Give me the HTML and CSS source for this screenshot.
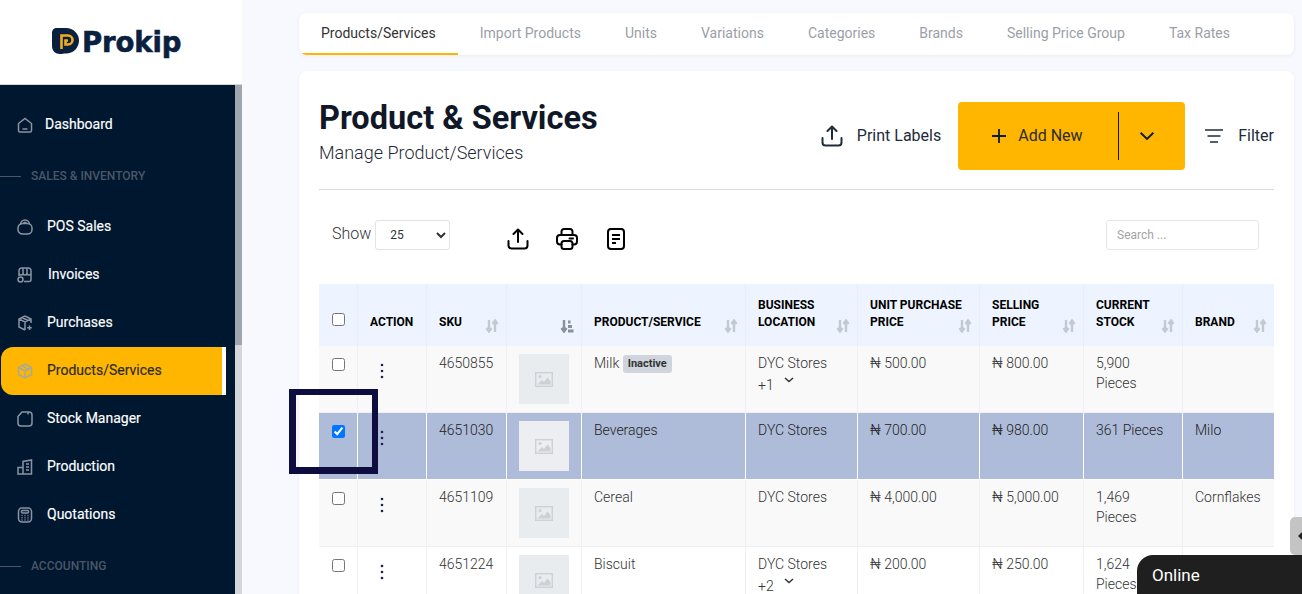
FILE: index.html
```html
<!DOCTYPE html>
<html lang="en">
<head>
<meta charset="utf-8">
<title>Prokip - Products</title>
<link rel="stylesheet" href="styles.css">
</head>
<body>
<svg class="defs" width="0" height="0" aria-hidden="true">
  <symbol id="sort" viewBox="0 0 14 14"><path d="M4 1v11M1.500 9 4 12.500 6.500 9M10 13V2M7.500 5 10 1.500 12.500 5" fill="none" stroke="currentColor" stroke-width="2.400"/></symbol>
  <symbol id="pic" viewBox="0 0 18 15"><rect x=".7" y=".7" width="16.600" height="13.600" fill="none" stroke="currentColor" stroke-width="1.400"/><circle cx="5" cy="4.500" r="1.600" fill="currentColor"/><path d="M2.500 12.500 7 8l2 2 3.500-4.500 3 3.500v3.500z" fill="currentColor"/></symbol>
  <symbol id="dots" viewBox="0 0 4 16"><circle cx="2" cy="2" r="1.300"/><circle cx="2" cy="8" r="1.300"/><circle cx="2" cy="14" r="1.300"/></symbol>
  <symbol id="chev" viewBox="0 0 10 6"><path d="M1 1l4 3.500L9 1" fill="none" stroke="currentColor" stroke-width="1.500"/></symbol>
  <symbol id="upload" viewBox="0 0 22 22"><path d="M11 14V2M6.500 6 11 1.500 15.500 6M1.500 13v4.500a3 3 0 0 0 3 3h13a3 3 0 0 0 3-3V13" fill="none" stroke="currentColor" stroke-width="2" stroke-linecap="round" stroke-linejoin="round"/></symbol>
</svg>
<div class="app">
  <aside class="sidebar">
    <div class="brand">
      <svg class="brand-mark" viewBox="0 0 27 26" width="27" height="26"><path d="M0 4.500A4.500 4.500 0 0 1 4.500 0H14a13 12.500 0 0 1 13 12.500A13 13 0 0 1 14 25.500c-2.500 0-4 .500-6 .500-4.500 0-8-3-8-8z" fill="#0b1f3f"/><path d="M9.500 21V7.500H16a4.500 4.500 0 0 1 0 9h-2.500V12.500H16" fill="none" stroke="#f2ac1f" stroke-width="2.600"/></svg>
      <span class="brand-name">Prokip</span>
    </div>
    <div class="nav-wrap">
      <nav class="nav">
        <a class="nav-item nav-first"><svg class="nav-icon" viewBox="0 0 16 16"><path d="M1.500 6.500 8 1.500l6.500 5v7a1.500 1.500 0 0 1-1.500 1.500H3a1.500 1.500 0 0 1-1.500-1.500zM5.500 12h5"/></svg><span>Dashboard</span></a>
        <div class="nav-section"><span class="rule"></span>SALES &amp; INVENTORY</div>
        <a class="nav-item"><svg class="nav-icon" viewBox="0 0 16 16"><rect x="1" y="4.500" width="14" height="10.500" rx="4.500"/><path d="M3.500 5.500C3.500 3 5.500 1 8 1s4.500 2 4.500 4.500M6.500 3.500h3"/></svg><span>POS Sales</span></a>
        <a class="nav-item"><svg class="nav-icon" viewBox="0 0 16 16"><path d="M2 6V3.500A2.500 2.500 0 0 1 4.500 1h7A2.500 2.500 0 0 1 14 3.500V6M2 6a2 2 0 0 0 4 0 2 2 0 0 0 4 0 2 2 0 0 0 4 0M6 1v5M10 1v5M14 6v6.500a2 2 0 0 1-2 2H7M2 6v3"/><circle cx="3.500" cy="12.500" r="2.500"/></svg><span class="wide">Invoices</span></a>
        <a class="nav-item"><svg class="nav-icon" viewBox="0 0 16 16"><path d="M8 1l6 3v4M8 1 2 4v8l6 3M2 4l6 3 6-3M8 7v8M5 2.500l6 3"/><path d="M12.500 10.500v4.500M10.200 12.800h4.600"/></svg><span>Purchases</span></a>
        <a class="nav-item is-active"><svg class="nav-icon" viewBox="0 0 16 16"><path d="M8 1l6.500 3.500v7L8 15l-6.500-3.500v-7zM1.500 4.500 8 8l6.500-3.500M8 8v7M4.800 2.700 11.200 6.200"/></svg><span>Products/Services</span></a>
        <a class="nav-item"><svg class="nav-icon" viewBox="0 0 16 16"><path d="M1 5.500 5 1h7a3 3 0 0 1 3 3v8a3 3 0 0 1-3 3H4a3 3 0 0 1-3-3zM11 1v2.500"/></svg><span>Stock Manager</span></a>
        <a class="nav-item"><svg class="nav-icon" viewBox="0 0 16 16"><path d="M1 15V8.500h5V15zM6 15V2.500L14.500 1v14zM1 15h14M9 5h3M9 8h3M9 11h3"/></svg><span>Production</span></a>
        <a class="nav-item"><svg class="nav-icon" viewBox="0 0 16 16"><rect x="1.500" y="1" width="13" height="14" rx="3.500"/><rect x="4.500" y="3.500" width="7" height="2.500" rx="1"/><path d="M4.500 8.500h1M7.500 8.500h1M10.500 8.500h1M4.500 10.800h1M7.500 10.800h1M10.500 10.800h1M4.500 13h1M7.500 13h1M10.500 13h1"/></svg><span>Quotations</span></a>
        <div class="nav-section"><span class="rule"></span>ACCOUNTING</div>
      </nav>
      <div class="sidebar-scroll"><div class="sidebar-thumb"></div></div>
    </div>
  </aside>

  <main class="main">
    <div class="tabs">
      <a class="tab is-current">Products/Services</a>
      <a class="tab">Import Products</a>
      <a class="tab">Units</a>
      <a class="tab">Variations</a>
      <a class="tab">Categories</a>
      <a class="tab">Brands</a>
      <a class="tab">Selling Price Group</a>
      <a class="tab">Tax Rates</a>
    </div>

    <section class="card">
      <header class="page-head">
        <div class="page-title">
          <h1>Product &amp; Services</h1>
          <p>Manage Product/Services</p>
        </div>
        <div class="page-actions">
          <a class="action-link"><svg class="icon-22" width="22" height="22"><use href="#upload"/></svg>Print Labels</a>
          <div class="add-btn">
            <span class="add-main"><svg width="16" height="16" viewBox="0 0 16 16"><path d="M8 1v14M1 8h14" stroke="#0b1a30" stroke-width="1.800"/></svg>Add New</span>
            <span class="add-caret"><svg width="16" height="10" viewBox="0 0 10 6"><path d="M1 1l4 3.800L9 1" fill="none" stroke="#0b1a30" stroke-width="1.200"/></svg></span>
          </div>
          <a class="action-link filter"><svg width="20" height="14" viewBox="0 0 20 14"><path d="M1 1h18M3.500 7h13M6 13h8" stroke="#222b3a" stroke-width="1.600"/></svg>Filter</a>
        </div>
      </header>

      <div class="toolbar">
        <label class="show">Show
          <select class="page-size"><option>25</option></select>
        </label>
        <div class="tools">
          <svg class="icon-22" width="22" height="22"><use href="#upload"/></svg>
          <svg class="icon-22" width="22" height="22" viewBox="0 0 22 22"><path d="M5.500 7V3.500a2.500 2.500 0 0 1 2.500-2.500h6a2.500 2.500 0 0 1 2.500 2.500V7M5.500 16.500H4A3 3 0 0 1 1 13.500V10a3 3 0 0 1 3-3h14a3 3 0 0 1 3 3v3.500a3 3 0 0 1-3 3h-1.500M13.500 10.500H17" fill="none" stroke="#000" stroke-width="2" stroke-linecap="round"/><rect x="5.500" y="13" width="11" height="8" rx="2.500" fill="none" stroke="#000" stroke-width="2"/></svg>
          <svg class="icon-22" width="22" height="22" viewBox="0 0 22 22"><rect x="3" y="1" width="16" height="20" rx="3" fill="none" stroke="#000" stroke-width="2"/><path d="M7 7h8M7 11h8M7 15h4" stroke="#000" stroke-width="2"/></svg>
        </div>
        <input class="search" type="text" placeholder="Search ...">
      </div>

      <table class="grid">
        <colgroup>
          <col class="c-check"><col class="c-action"><col class="c-sku"><col class="c-img"><col class="c-prod"><col class="c-loc"><col class="c-unit"><col class="c-sell"><col class="c-stock"><col class="c-brand">
        </colgroup>
        <thead>
          <tr>
            <th class="cell-check"><input type="checkbox"></th>
            <th><div class="th-in">ACTION</div></th>
            <th><div class="th-in">SKU<svg class="sort"><use href="#sort"/></svg></div></th>
            <th><div class="th-in"><svg class="sort sort-on" viewBox="0 0 14 14"><path d="M4 1v11M1.500 9 4 12.500 6.500 9" fill="none" stroke="currentColor" stroke-width="2.400"/><path d="M8 1.500h2.500v3H8zM8 6h4v3H8zM8 10.500h5.500v3H8z" fill="currentColor"/></svg></div></th>
            <th><div class="th-in">PRODUCT/SERVICE<svg class="sort"><use href="#sort"/></svg></div></th>
            <th><div class="th-in">BUSINESS<br>LOCATION<svg class="sort"><use href="#sort"/></svg></div></th>
            <th><div class="th-in">UNIT PURCHASE<br>PRICE<svg class="sort"><use href="#sort"/></svg></div></th>
            <th><div class="th-in">SELLING<br>PRICE<svg class="sort"><use href="#sort"/></svg></div></th>
            <th><div class="th-in">CURRENT<br>STOCK<svg class="sort"><use href="#sort"/></svg></div></th>
            <th><div class="th-in">BRAND<svg class="sort"><use href="#sort"/></svg></div></th>
          </tr>
        </thead>
        <tbody>
          <tr class="odd">
            <td class="cell-check"><input type="checkbox"></td>
            <td class="cell-dots"><svg class="dots"><use href="#dots"/></svg></td>
            <td>4650855</td>
            <td class="cell-img"><div class="thumb"><svg class="pic"><use href="#pic"/></svg></div></td>
            <td>Milk <span class="badge">Inactive</span></td>
            <td>DYC Stores<div class="more">+1 <svg class="chev"><use href="#chev"/></svg></div></td>
            <td>₦ 500.00</td>
            <td>₦ 800.00</td>
            <td>5,900 Pieces</td>
            <td></td>
          </tr>
          <tr class="selected">
            <td class="cell-check"><input type="checkbox" checked></td>
            <td class="cell-dots"><svg class="dots"><use href="#dots"/></svg></td>
            <td>4651030</td>
            <td class="cell-img"><div class="thumb"><svg class="pic"><use href="#pic"/></svg></div></td>
            <td>Beverages</td>
            <td>DYC Stores</td>
            <td>₦ 700.00</td>
            <td>₦ 980.00</td>
            <td>361 Pieces</td>
            <td>Milo</td>
          </tr>
          <tr class="odd">
            <td class="cell-check"><input type="checkbox"></td>
            <td class="cell-dots"><svg class="dots"><use href="#dots"/></svg></td>
            <td>4651109</td>
            <td class="cell-img"><div class="thumb"><svg class="pic"><use href="#pic"/></svg></div></td>
            <td>Cereal</td>
            <td>DYC Stores</td>
            <td>₦ 4,000.00</td>
            <td>₦ 5,000.00</td>
            <td>1,469 Pieces</td>
            <td>Cornflakes</td>
          </tr>
          <tr>
            <td class="cell-check"><input type="checkbox"></td>
            <td class="cell-dots"><svg class="dots"><use href="#dots"/></svg></td>
            <td>4651224</td>
            <td class="cell-img"><div class="thumb"><svg class="pic"><use href="#pic"/></svg></div></td>
            <td>Biscuit</td>
            <td>DYC Stores<div class="more">+2 <svg class="chev"><use href="#chev"/></svg></div></td>
            <td>₦ 200.00</td>
            <td>₦ 250.00</td>
            <td>1,624 Pieces</td>
            <td></td>
          </tr>
        </tbody>
      </table>
    </section>
  </main>
</div>
<div class="annotation"></div>
<div class="edge-handle"><span class="edge-arrow"></span></div>
<div class="chat">Online</div>
</body>
</html>
```
FILE: styles.css
```css
* { box-sizing: border-box; }
html, body { height: 100%; }
body {
  margin: 0;
  overflow: hidden;
  font-family: Roboto, "Liberation Sans", sans-serif;
  font-size: 14px;
  color: #333;
  background: #f8f9ff;
}
.defs { position: absolute; }
.app { display: flex; height: 594px; overflow: hidden; }

/* sidebar */
.sidebar { width: 242px; flex: none; display: flex; flex-direction: column; background: #fff; }
.brand { height: 85px; flex: none; display: flex; align-items: flex-start; padding: 27px 0 0 52px; border-bottom: 1px solid #d5d7db; }
.brand-mark { flex: none; margin-top: 1px; }
.brand-name { font-family: "DejaVu Sans", sans-serif; font-weight: 700; font-size: 27.500px; line-height: 30px; letter-spacing: -.1px; -webkit-text-stroke: .6px #0b1f3f; color: #0b1f3f; margin-left: 3px; }
.nav-wrap { flex: 1; display: flex; min-height: 0; background: #001730; }
.nav { flex: 1; padding: 16px 0 0 1px; min-width: 0; }
.nav-item { display: flex; align-items: center; height: 48px; width: 225px; padding: 0 0 2px 16px; gap: 14px; color: #fff; font-size: 14px; font-weight: 400; }
.nav-item span { -webkit-text-stroke: .15px #fff; }
.nav-first { gap: 12px; }
.nav-item .wide { margin-left: 1px; }
.nav-icon { width: 16px; height: 16px; flex: none; margin-top: 2px; fill: none; stroke: #8a93a2; stroke-width: 1.500; }
.is-active { background: #ffb600; color: #2a2a2a; border-radius: 12px 0 0 12px; border-right: 4px solid #fff; }
.nav-item.is-active span { -webkit-text-stroke: .15px #2a2a2a; }
.is-active .nav-icon { stroke: #a5a9a0; }
.nav-section { display: flex; align-items: center; height: 54px; margin-left: -1px; font-size: 12px; font-weight: 500; color: #4b5666; }
.rule { width: 21px; height: 1px; background: #4b5666; margin-right: 10px; }
.sidebar-scroll { width: 7px; flex: none; background: #d4d6da; }
.sidebar-thumb { height: 260px; background: #a0a6b0; }

/* main */
.main { flex: 1; min-width: 0; padding: 13px 8px 0 57px; }
.tabs { display: flex; height: 42px; background: #fff; border-radius: 8px; box-shadow: 0 1px 4px rgba(0,0,0,.06); overflow: hidden; }
.tab { padding: 0 22px; line-height: 40px; color: #9a9fa8; font-size: 14px; white-space: nowrap; border-bottom: 2px solid transparent; }
.tab.is-current { color: #333; border-bottom-color: #ffb600; }
.card { margin-top: 16px; background: #fff; border-radius: 8px; padding: 31px 20px 0; box-shadow: 0 1px 4px rgba(0,0,0,.05); height: 560px; overflow: hidden; }

.page-head { display: flex; justify-content: space-between; align-items: flex-start; height: 88px; border-bottom: 1px solid #d9d9d9; }
.page-title { padding-top: 1px; }
.page-title h1 { margin: 0; font-size: 32.500px; line-height: 30px; font-weight: 700; color: #101828; }
.page-title p { margin: 8px 0 0; font-size: 18px; line-height: 24px; font-weight: 300; color: #1f2937; }
.page-actions { display: flex; align-items: center; height: 68px; }
.action-link { display: flex; align-items: center; gap: 14px; height: 66px; padding-bottom: 1px; font-size: 16px; color: #222b3a; }
.action-link > svg { margin-top: 1px; }
.add-btn { display: flex; align-items: center; width: 227px; height: 68px; margin: 0 19px 0 17px; background: #ffb600; border-radius: 4px; }
.add-main { display: flex; align-items: center; gap: 11px; width: 161px; height: 48px; padding: 0 0 1px 33px; border-right: 1px solid #0b1a30; font-size: 16px; color: #2b2b2b; }
.add-main svg { margin-top: 1px; }
.add-caret { flex: 1; display: flex; justify-content: center; padding-right: 10px; }

.toolbar { display: flex; align-items: center; height: 30px; margin-top: 30px; padding: 0 15px 0 13px; }
.show { display: flex; align-items: center; gap: 4px; font-size: 16px; font-weight: 300; color: #333; }
.show { position: relative; top: -2px; }
.page-size { width: 75px; height: 30px; padding: 0 0 0 10px; border: 1px solid #e3e3e3; border-radius: 3px; background: #fff; font-family: inherit; font-size: 12px; color: #333; position: relative; top: 2px; }
.tools { display: flex; gap: 27px; margin-left: 57px; margin-top: 8px; color: #000; flex: 1; }
.search { width: 153px; height: 30px; padding: 0 10px; border: 1px solid #e6e6e6; border-radius: 3px; font-family: inherit; font-size: 12px; background: #fff; }
.search::placeholder { color: #a3a3a3; }

/* table */
.grid { table-layout: fixed; width: 955px; margin-top: 34px; border-collapse: separate; border-spacing: 0; }
.c-check { width: 38px; } .c-action { width: 69px; } .c-sku { width: 80px; } .c-img { width: 75px; } .c-prod { width: 164px; }
.c-loc { width: 112px; } .c-unit { width: 122px; } .c-sell { width: 104px; } .c-stock { width: 99px; } .c-brand { width: 92px; }
thead tr { height: 62px; background: #edf4ff; }
th { padding: 0 7px 15px 12px; vertical-align: bottom; text-align: left; font-size: 12px; line-height: 17px; font-weight: 700; color: #000; border-left: 1px solid #e8eef7; }
th:first-child { border-left: 0; }
.th-in { position: relative; min-height: 17px; white-space: nowrap; }
.sort { position: absolute; right: 0; bottom: -2px; width: 14px; height: 14px; color: #c3c9d1; }
.sort-on { color: #8b9098; }
tbody tr { height: 67px; background: #fff; }
tbody tr.odd { background: #f9f9f9; }
td { padding: 7px 12px 0 12px; vertical-align: top; font-size: 14px; line-height: 20px; font-weight: 300; color: #333; border-left: 1px solid #f0f0f0; border-bottom: 1px solid #f0f0f0; }
td:first-child { border-left: 0; }
tbody tr.selected { background: #aebcd9; }
.selected td { border-left-color: #fff; border-bottom-color: #fff; color: #222; }
.selected td:first-child { border-left: 0; }
input[type="checkbox"] { width: 13px; height: 13px; margin: 0; display: block; }
th.cell-check { padding: 29px 0 0 13px; vertical-align: top; }
td.cell-check { padding: 12px 0 0 13px; }
td.cell-dots { padding: 17px 0 0 22px; }
.dots { display: block; width: 4px; height: 16px; fill: #1d2350; }
td.cell-img { padding: 8px 0 0 12px; }
.thumb { width: 50px; height: 50px; display: flex; align-items: center; justify-content: center; background: #e9ecef; color: #cdd0d4; }
.selected .thumb { background: #eceef1; }
.pic { width: 18px; height: 15px; }
.badge { display: inline-block; margin-left: 0; padding: 0 5px; height: 18px; line-height: 18px; border-radius: 3px; background: #d0d5dd; font-size: 11px; font-weight: 700; color: #333; vertical-align: 1px; }
.more { margin-top: 2px; }
.chev { width: 10px; height: 6px; margin: 0 0 7px 7px; color: #333; }

/* overlays */
.annotation { position: absolute; left: 289px; top: 389px; width: 89px; height: 85px; border-style: solid; border-color: #0d0d40; border-width: 6px 6px 7px 7px; }
.edge-handle { position: absolute; left: 1290px; top: 517px; width: 12px; height: 38px; background: #c4c4c4; border-radius: 5px 0 0 5px; }
.edge-arrow { position: absolute; left: 8px; top: 14px; width: 0; height: 0; border: 5px solid transparent; border-right-color: #222; border-left: 0; }
.chat { position: absolute; left: 1137px; top: 555px; width: 165px; height: 39px; padding: 9px 0 0 15px; background: #1f1f1f; border-radius: 16px 0 0 0; color: #fff; font-size: 17px; line-height: 22px; font-weight: 400; }
```
